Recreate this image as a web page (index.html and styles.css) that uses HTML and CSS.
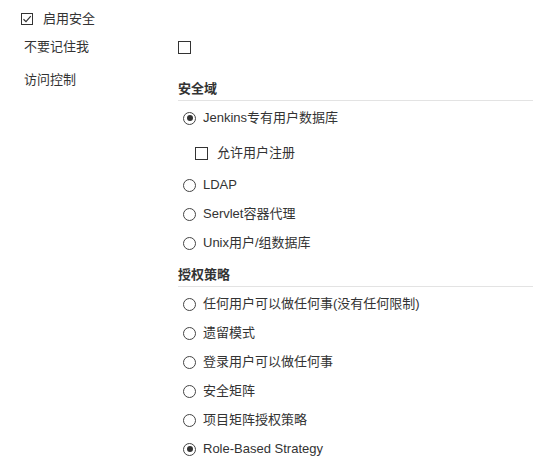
FILE: index.html
```html
<!DOCTYPE html>
<html lang="zh-CN">
<head>
<meta charset="utf-8">
<title>配置全局安全</title>
<link rel="stylesheet" href="styles.css">
</head>
<body>
<div class="page">
  <div class="top-row">
    <span class="cb checked"><svg viewBox="0 0 12 12" width="12" height="12"><path d="M2.5 6.2 L5 8.6 L9.8 3.2" fill="none" stroke="#333" stroke-width="1.2"/></svg></span>
    <span class="txt">启用安全</span>
  </div>

  <div class="form">
    <div class="label row-remember">不要记住我</div>
    <div class="value row-remember"><span class="cb"></span></div>

    <div class="label row-access">访问控制</div>
    <div class="value value-access">
      <div class="heading">安全域</div>
      <div class="opt first"><span class="radio on"></span><span class="txt">Jenkins专有用户数据库</span></div>
      <div class="sub"><span class="cb"></span><span class="txt">允许用户注册</span></div>
      <div class="opt after-sub"><span class="radio"></span><span class="txt">LDAP</span></div>
      <div class="opt"><span class="radio"></span><span class="txt">Servlet容器代理</span></div>
      <div class="opt"><span class="radio"></span><span class="txt">Unix用户/组数据库</span></div>

      <div class="heading second">授权策略</div>
      <div class="opt first"><span class="radio"></span><span class="txt">任何用户可以做任何事(没有任何限制)</span></div>
      <div class="opt"><span class="radio"></span><span class="txt">遗留模式</span></div>
      <div class="opt"><span class="radio"></span><span class="txt">登录用户可以做任何事</span></div>
      <div class="opt"><span class="radio"></span><span class="txt">安全矩阵</span></div>
      <div class="opt"><span class="radio"></span><span class="txt">项目矩阵授权策略</span></div>
      <div class="opt"><span class="radio on"></span><span class="txt">Role-Based Strategy</span></div>
    </div>
  </div>
</div>
</body>
</html>
```

FILE: styles.css
```css
html, body {
  margin: 0;
  padding: 0;
  background: #ffffff;
}

body {
  font-family: "Liberation Sans", "Noto Sans CJK SC", sans-serif;
  font-size: 13px;
  color: #333333;
}

.page {
  padding-top: 13px;
}

.top-row {
  display: flex;
  align-items: center;
  gap: 10px;
  padding-left: 21px;
  height: 12px;
}

.cb {
  box-sizing: border-box;
  width: 12px;
  height: 12px;
  border: 1px solid #333333;
  background: #ffffff;
  flex: none;
  display: inline-flex;
  align-items: center;
  justify-content: center;
}

.cb.checked svg {
  display: block;
  margin: -1px;
}

.value .cb {
  width: 13px;
  height: 13px;
}

.radio {
  box-sizing: border-box;
  width: 13px;
  height: 13px;
  border: 1px solid #444444;
  border-radius: 50%;
  flex: none;
  display: inline-flex;
  align-items: center;
  justify-content: center;
}

.radio.on::after {
  content: "";
  width: 6px;
  height: 6px;
  border-radius: 50%;
  background: #333333;
}

.txt {
  line-height: 20px;
}

.form {
  display: grid;
  grid-template-columns: 154px 1fr;
  padding-left: 24px;
  margin-top: 12px;
}

.label {
  line-height: 20px;
}

.row-remember {
  height: 20px;
  display: flex;
  align-items: center;
}

.row-access {
  margin-top: 13px;
}

.value-access {
  margin-top: 13px;
  padding-top: 9px;
}

.heading {
  font-weight: bold;
  line-height: 20px;
  padding-bottom: 1px;
  border-bottom: 1px solid #e3e3e3;
}

.heading.second {
  margin-top: 12px;
}

.opt {
  display: flex;
  align-items: center;
  gap: 7px;
  height: 20px;
  padding-left: 5px;
  margin-top: 9px;
}

.opt.first {
  margin-top: 7px;
}

.opt.after-sub {
  margin-top: 12px;
}

.sub {
  display: flex;
  align-items: center;
  gap: 9px;
  height: 20px;
  padding-left: 17px;
  margin-top: 15px;
}
```
